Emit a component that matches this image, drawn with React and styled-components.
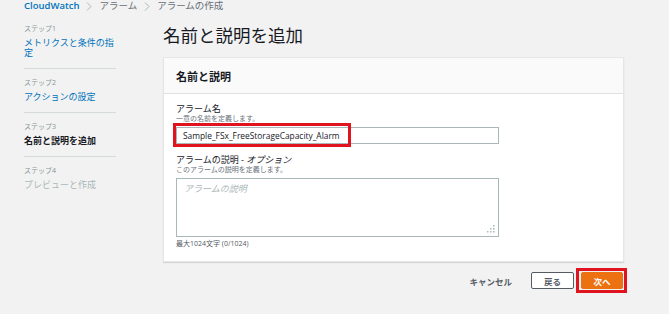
import React from "react"
import styled, { createGlobalStyle } from "styled-components"

const GlobalStyle = createGlobalStyle`
  html, body {
    margin: 0;
    padding: 0;
    background: #f2f2f2;
  }
  body {
    font-family: "Open Sans", "Noto Sans CJK JP", sans-serif;
    color: #16191f;
  }
`

const Page = styled.div`
  width: 669px;
  height: 314px;
  overflow: hidden;
  background: #f2f2f2;
`

const Breadcrumbs = styled.nav`
  display: flex;
  align-items: center;
  gap: 7px;
  padding: 0 0 0 24px;
  height: 12px;
  font-size: 9.5px;
  line-height: 12px;
`

const Crumb = styled.span`
  color: ${({ active }) => (active ? "#0073bb" : "#687078")};
  font-weight: ${({ active }) => (active ? 600 : 400)};
`

const Chevron = () => (
  <svg width="6" height="9" viewBox="0 0 6 9">
    <path d="M1 0.5 L5 4.5 L1 8.5" fill="none" stroke="#aab7b8" strokeWidth="1" />
  </svg>
)

const Layout = styled.div`
  display: grid;
  grid-template-columns: 92px 1fr;
  column-gap: 47px;
  padding: 0 45px 0 24px;
`

const Steps = styled.ol`
  list-style: none;
  margin: 0;
  padding: 12px 0 0;
`

const Step = styled.li`
  padding: 0 0 10px;
  margin-bottom: 9px;
  border-bottom: ${({ last }) => (last ? "none" : "1px solid #d5dbdb")};
`

const StepLabel = styled.div`
  font-size: 7px;
  line-height: 10px;
  color: #879596;
`

const StepTitle = styled.div`
  font-size: 9px;
  line-height: 10px;
  margin-top: 4px;
  color: ${({ state }) =>
    state === "current" ? "#16191f" : state === "disabled" ? "#aab7b8" : "#0073bb"};
  font-weight: ${({ state }) => (state === "current" ? 700 : 400)};
`

const Main = styled.main`
  display: flex;
  flex-direction: column;
`

const Title = styled.h1`
  margin: 11px 0 0;
  font-size: 17.5px;
  line-height: 24px;
  font-weight: 400;
  color: #16191f;
`

const Card = styled.section`
  margin-top: 10px;
  background: #fff;
  border: 1px solid #e6e6e6;
  box-shadow: 0 1px 1px rgba(0, 28, 36, 0.12);
`

const CardHeader = styled.header`
  height: 35px;
  display: flex;
  align-items: center;
  padding: 0 12px;
  background: #fafafa;
  border-bottom: 1px solid #e2e2e2;
  font-size: 11px;
  font-weight: 700;
`

const CardBody = styled.div`
  padding: 9px 12px 12px;
  display: flex;
  flex-direction: column;
  gap: 10px;
`

const Field = styled.div`
  display: flex;
  flex-direction: column;
`

const Label = styled.label`
  font-size: 9px;
  line-height: 11px;
  color: #16191f;
`

const Optional = styled.i`
  font-style: italic;
`

const Hint = styled.div`
  font-size: 7px;
  line-height: 10px;
  color: #687078;
`

const InputWrap = styled.div`
  position: relative;
  width: 323px;
  margin-top: 3px;
`

const Input = styled.div`
  box-sizing: border-box;
  height: 17px;
  border: 1px solid #aab7b8;
  display: flex;
  align-items: center;
  padding: 0 6px;
  font-size: 8.4px;
  color: #16191f;
  background: #fff;
`

const Highlight = styled.div`
  position: absolute;
  left: -3px;
  top: -4px;
  width: 178px;
  height: 24px;
  box-sizing: border-box;
  border: 3px solid #e0141e;
  pointer-events: none;
`

const TextArea = styled.div`
  position: relative;
  box-sizing: border-box;
  width: 323px;
  height: 59px;
  margin-top: 3px;
  border: 1px solid #aab7b8;
  padding: 3px 7px;
  font-size: 9px;
  font-style: italic;
  color: #aab7b8;
`

const Grip = styled.svg`
  position: absolute;
  right: 3px;
  bottom: 3px;
`

const Counter = styled.div`
  margin-top: 2px;
  font-size: 7px;
  line-height: 10px;
  color: #545b64;
`

const Footer = styled.footer`
  display: flex;
  justify-content: flex-end;
  align-items: center;
  margin-top: 6px;
  margin-right: -3px;
`

const TextButton = styled.button`
  border: none;
  background: none;
  font-family: inherit;
  font-size: 8.5px;
  font-weight: 700;
  color: #545b64;
  padding: 0;
  margin-right: 19px;
`

const Button = styled.button`
  box-sizing: border-box;
  font-family: inherit;
  font-size: 8.5px;
  font-weight: 700;
  width: ${({ primary }) => (primary ? "42px" : "43px")};
  height: 17px;
  padding: 0;
  border: 1px solid ${({ primary }) => (primary ? "#ec7211" : "#545b64")};
  border-radius: 2px;
  background: ${({ primary }) => (primary ? "#ec7211" : "#fff")};
  color: ${({ primary }) => (primary ? "#fff" : "#545b64")};
`

const HighlightFrame = styled.div`
  margin-left: 2px;
  padding: 1px 1px 1px 2px;
  border: 3px solid #e0141e;
  display: flex;
`

const steps = [
  { n: 1, title: "メトリクスと条件の指定", state: "link" },
  { n: 2, title: "アクションの設定", state: "link" },
  { n: 3, title: "名前と説明を追加", state: "current" },
  { n: 4, title: "プレビューと作成", state: "disabled" },
]

const App = () => (
  <Page>
    <GlobalStyle />
    <Breadcrumbs>
      <Crumb active>CloudWatch</Crumb>
      <Chevron />
      <Crumb>アラーム</Crumb>
      <Chevron />
      <Crumb>アラームの作成</Crumb>
    </Breadcrumbs>
    <Layout>
      <Steps>
        {steps.map((s, i) => (
          <Step key={s.n} last={i === steps.length - 1}>
            <StepLabel>ステップ{s.n}</StepLabel>
            <StepTitle state={s.state}>{s.title}</StepTitle>
          </Step>
        ))}
      </Steps>
      <Main>
        <Title>名前と説明を追加</Title>
        <Card>
          <CardHeader>名前と説明</CardHeader>
          <CardBody>
            <Field>
              <Label>アラーム名</Label>
              <Hint>一意の名前を定義します。</Hint>
              <InputWrap>
                <Input>Sample_FSx_FreeStorageCapacity_Alarm</Input>
                <Highlight />
              </InputWrap>
            </Field>
            <Field>
              <Label>
                アラームの説明 - <Optional>オプション</Optional>
              </Label>
              <Hint>このアラームの説明を定義します。</Hint>
              <TextArea>
                アラームの説明
                <Grip width="8" height="8" viewBox="0 0 8 8">
                  <rect x="6" y="0" width="1.5" height="1.5" fill="#aab7b8" />
                  <rect x="6" y="3" width="1.5" height="1.5" fill="#aab7b8" />
                  <rect x="6" y="6" width="1.5" height="1.5" fill="#aab7b8" />
                  <rect x="3" y="3" width="1.5" height="1.5" fill="#aab7b8" />
                  <rect x="3" y="6" width="1.5" height="1.5" fill="#aab7b8" />
                  <rect x="0" y="6" width="1.5" height="1.5" fill="#aab7b8" />
                </Grip>
              </TextArea>
              <Counter>最大1024文字 (0/1024)</Counter>
            </Field>
          </CardBody>
        </Card>
        <Footer>
          <TextButton>キャンセル</TextButton>
          <Button>戻る</Button>
          <HighlightFrame>
            <Button primary>次へ</Button>
          </HighlightFrame>
        </Footer>
      </Main>
    </Layout>
  </Page>
)

export default App
